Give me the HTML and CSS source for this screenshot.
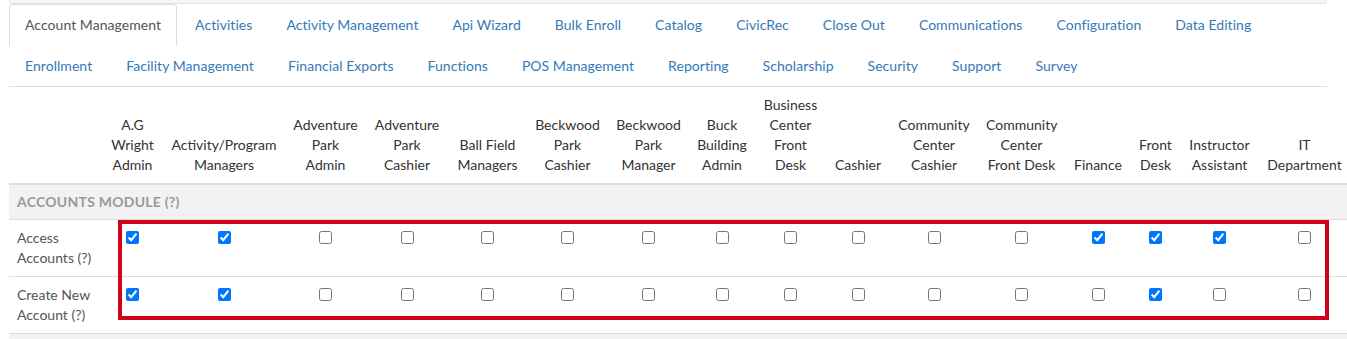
FILE: index.html
```html
<!DOCTYPE html>
<html>
<head>
<meta charset="utf-8">
<link rel="stylesheet" href="styles.css">
</head>
<body>
<div class="page">
  <div class="well-edge"></div>
  <ul class="nav-tabs">
    <li class="active"><a>Account Management</a></li>
    <li><a>Activities</a></li>
    <li><a>Activity Management</a></li>
    <li><a>Api Wizard</a></li>
    <li><a>Bulk Enroll</a></li>
    <li><a>Catalog</a></li>
    <li><a>CivicRec</a></li>
    <li><a>Close Out</a></li>
    <li><a>Communications</a></li>
    <li><a>Configuration</a></li>
    <li><a>Data Editing</a></li>
    <li class="break"></li>
    <li><a>Enrollment</a></li>
    <li><a>Facility Management</a></li>
    <li><a>Financial Exports</a></li>
    <li><a>Functions</a></li>
    <li><a>POS Management</a></li>
    <li><a>Reporting</a></li>
    <li><a>Scholarship</a></li>
    <li><a>Security</a></li>
    <li><a>Support</a></li>
    <li><a>Survey</a></li>
  </ul>
  <div class="table-wrap">
    <table class="perm">
      <thead>
        <tr>
          <th></th>
          <th>A.G<br>Wright<br>Admin</th>
          <th>Activity/Program<br>Managers</th>
          <th>Adventure<br>Park<br>Admin</th>
          <th>Adventure<br>Park<br>Cashier</th>
          <th>Ball Field<br>Managers</th>
          <th>Beckwood<br>Park<br>Cashier</th>
          <th>Beckwood<br>Park<br>Manager</th>
          <th>Buck<br>Building<br>Admin</th>
          <th>Business<br>Center<br>Front<br>Desk</th>
          <th>Cashier</th>
          <th>Community<br>Center<br>Cashier</th>
          <th>Community<br>Center<br>Front Desk</th>
          <th>Finance</th>
          <th>Front<br>Desk</th>
          <th>Instructor<br>Assistant</th>
          <th>IT<br>Department</th>
        </tr>
      </thead>
      <tbody>
        <tr class="section"><td colspan="17">Accounts Module (?)</td></tr>
        <tr>
          <td class="label">Access<br>Accounts (?)</td>
          <td><input type="checkbox" checked></td>
          <td><input type="checkbox" checked></td>
          <td><input type="checkbox"></td>
          <td><input type="checkbox"></td>
          <td><input type="checkbox"></td>
          <td><input type="checkbox"></td>
          <td><input type="checkbox"></td>
          <td><input type="checkbox"></td>
          <td><input type="checkbox"></td>
          <td><input type="checkbox"></td>
          <td><input type="checkbox"></td>
          <td><input type="checkbox"></td>
          <td><input type="checkbox" checked></td>
          <td><input type="checkbox" checked></td>
          <td><input type="checkbox" checked></td>
          <td><input type="checkbox"></td>
        </tr>
        <tr>
          <td class="label">Create New<br>Account (?)</td>
          <td><input type="checkbox" checked></td>
          <td><input type="checkbox" checked></td>
          <td><input type="checkbox"></td>
          <td><input type="checkbox"></td>
          <td><input type="checkbox"></td>
          <td><input type="checkbox"></td>
          <td><input type="checkbox"></td>
          <td><input type="checkbox"></td>
          <td><input type="checkbox"></td>
          <td><input type="checkbox"></td>
          <td><input type="checkbox"></td>
          <td><input type="checkbox"></td>
          <td><input type="checkbox"></td>
          <td><input type="checkbox" checked></td>
          <td><input type="checkbox"></td>
          <td><input type="checkbox"></td>
        </tr>
        <tr class="section"><td colspan="17">&nbsp;</td></tr>
      </tbody>
    </table>
    <div class="highlight"></div>
  </div>
</div>
</body>
</html>
```

FILE: styles.css
```css
html, body {
  margin: 0;
  padding: 0;
  overflow: hidden;
  background: #fff;
}

body {
  font-family: Lato, "Open Sans", "Liberation Sans", sans-serif;
  font-size: 14px;
  line-height: 20px;
  color: #333;
}

.page {
  padding-left: 9px;
  width: 1318px;
}

.well-edge {
  height: 3px;
  background: #f5f5f5;
  border: 1px solid #e3e3e3;
  border-top: 0;
  border-radius: 0 0 4px 4px;
}

.nav-tabs {
  list-style: none;
  margin: 0;
  padding: 0;
  display: flex;
  flex-wrap: wrap;
  border-bottom: 1px solid #ddd;
}

.nav-tabs li {
  margin-bottom: -1px;
}

.nav-tabs li.break {
  flex-basis: 100%;
  height: 0;
  margin: 0;
}

.nav-tabs a {
  display: block;
  padding: 10px 15px;
  margin-right: 2px;
  line-height: 20px;
  border: 1px solid transparent;
  border-radius: 4px 4px 0 0;
  color: #337ab7;
  white-space: nowrap;
  letter-spacing: 0.05px;
}

.nav-tabs li.active a {
  color: #555;
  background: #fff;
  border-color: #ddd #ddd transparent;
}

.table-wrap {
  position: relative;
  width: 1341px;
}

.perm {
  border-collapse: collapse;
  table-layout: fixed;
  width: 1341px;
}

.perm th,
.perm td {
  padding: 8px;
  line-height: 20px;
  white-space: nowrap;
}

.perm th {
  font-weight: normal;
  color: #333;
  text-align: center;
  vertical-align: bottom;
  border-bottom: 2px solid #ddd;
}

.perm td {
  text-align: center;
  vertical-align: top;
  border-top: 1px solid #ddd;
}

.perm td.label {
  text-align: left;
  color: #555;
}

.perm tr.section td {
  padding: 7px 8px;
  background: #f2f2f2;
  text-align: left;
  text-transform: uppercase;
  font-weight: bold;
  font-size: 14px;
  letter-spacing: 0.25px;
  color: #999;
}

.perm input[type="checkbox"] {
  margin: 3px 0 0;
  width: 13px;
  height: 13px;
  vertical-align: top;
}

.perm th:nth-child(1)  { width: 77px; }
.perm th:nth-child(2)  { width: 45px; }
.perm th:nth-child(3)  { width: 106px; }
.perm th:nth-child(4)  { width: 65px; }
.perm th:nth-child(5)  { width: 66px; }
.perm th:nth-child(6)  { width: 63px; }
.perm th:nth-child(7)  { width: 65px; }
.perm th:nth-child(8)  { width: 65px; }
.perm th:nth-child(9)  { width: 50px; }
.perm th:nth-child(10) { width: 55px; }
.perm th:nth-child(11) { width: 48px; }
.perm th:nth-child(12) { width: 72px; }
.perm th:nth-child(13) { width: 71px; }
.perm th:nth-child(14) { width: 50px; }
.perm th:nth-child(15) { width: 33px; }
.perm th:nth-child(16) { width: 63px; }
.perm th:nth-child(17) { width: 75px; }

.highlight {
  position: absolute;
  left: 109px;
  top: 133px;
  width: 1211px;
  height: 100px;
  box-sizing: border-box;
  border: 4px solid #d0021b;
  pointer-events: none;
}
```
